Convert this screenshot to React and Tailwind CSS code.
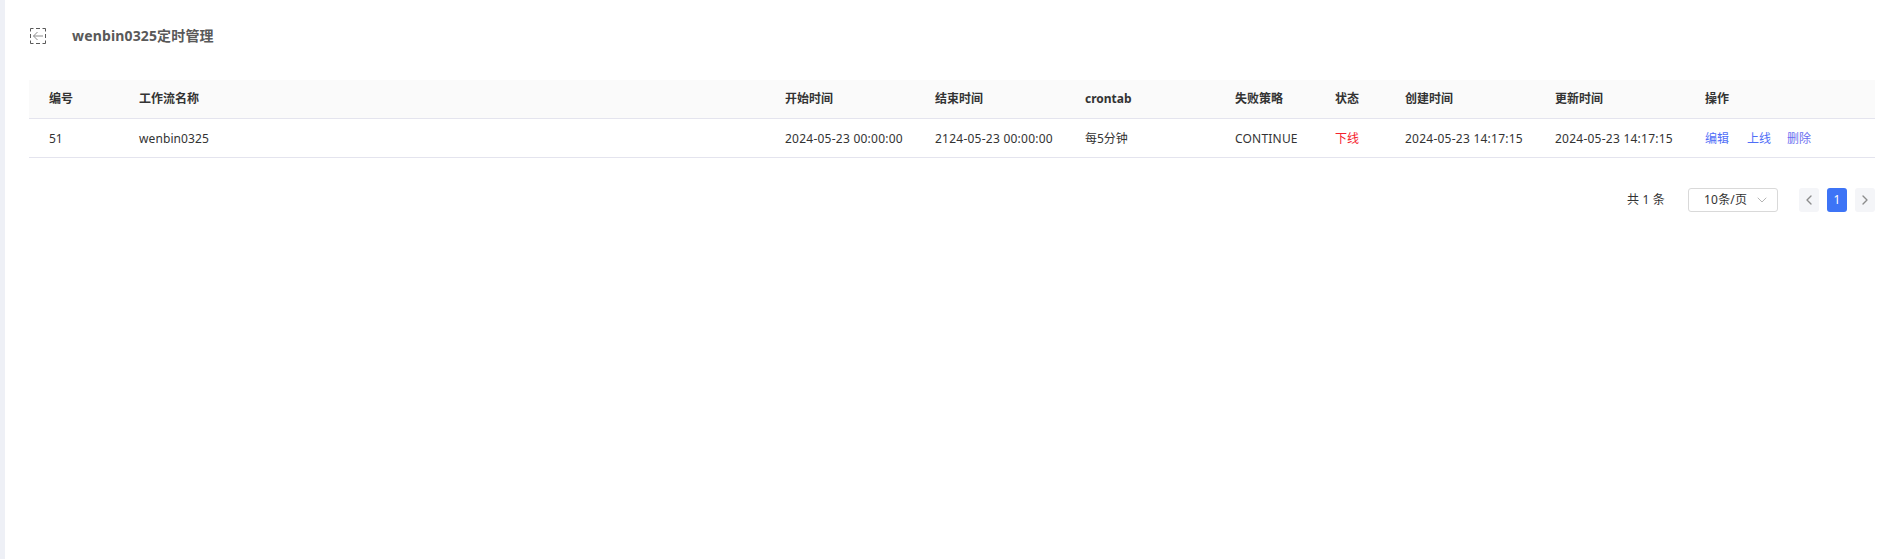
import { ChevronDown, ChevronLeft, ChevronRight } from "lucide-react";

const columns = [
  { key: "id", title: "编号", width: "w-[90px]" },
  { key: "name", title: "工作流名称", width: "w-[646px]" },
  { key: "start", title: "开始时间", width: "w-[150px]" },
  { key: "end", title: "结束时间", width: "w-[150px]" },
  { key: "crontab", title: "crontab", width: "w-[150px]" },
  { key: "strategy", title: "失败策略", width: "w-[100px]" },
  { key: "status", title: "状态", width: "w-[70px]" },
  { key: "created", title: "创建时间", width: "w-[150px]" },
  { key: "updated", title: "更新时间", width: "w-[150px]" },
  { key: "action", title: "操作", width: "w-[190px]" },
];

const row = {
  id: "51",
  name: "wenbin0325",
  start: "2024-05-23 00:00:00",
  end: "2124-05-23 00:00:00",
  crontab: "每5分钟",
  strategy: "CONTINUE",
  created: "2024-05-23 14:17:15",
  updated: "2024-05-23 14:17:15",
};

function BackIcon() {
  return (
    <svg width="16" height="16" viewBox="0 0 16 16" fill="none" className="shrink-0 ml-px">
      <path
        d="M0.5 3.5V0.5H3.5M6 0.5H10M12.5 0.5H15.5V3.5M15.5 6V10M15.5 12.5V15.5H12.5M10 15.5H6M3.5 15.5H0.5V12.5M0.5 10V6"
        stroke="#595959"
      />
      <path d="M13 8H3.5M7.5 4L3.5 8L7.5 12" stroke="#8c8c8c" />
    </svg>
  );
}

export default function App() {
  return (
    <div className="min-h-[559px] bg-white border-l-[5px] border-[#eef0f6] font-['Noto_Sans','Noto_Sans_CJK_SC',sans-serif] text-xs text-[#333]">
      <div className="px-6 pt-[27px]">
        <header className="flex items-center h-[17px] mb-[36px]">
          <BackIcon />
          <h1 className="ml-[26px] text-sm font-bold text-[#595959] tracking-[0.15px]">wenbin0325定时管理</h1>
        </header>

        <table className="w-[1846px] table-fixed border-collapse">
          <thead>
            <tr className="h-[38px] bg-[#fafafa] border-b border-[#e4e4ee]">
              {columns.map((c) => (
                <th key={c.key} className={`${c.width} pl-5 text-left font-bold text-[#333]`}>{c.title}</th>
              ))}
            </tr>
          </thead>
          <tbody>
            <tr className="h-[39px] border-b border-[#e4e4ee]">
              <td className="pl-5 pt-[2px]">{row.id}</td>
              <td className="pl-5 pt-[2px] tracking-[0.1px]">{row.name}</td>
              <td className="pl-5 pt-[2px] tracking-[0.24px]">{row.start}</td>
              <td className="pl-5 pt-[2px] tracking-[0.24px]">{row.end}</td>
              <td className="pl-5 pt-[2px]">{row.crontab}</td>
              <td className="pl-5 pt-[2px] tracking-[0.2px]">{row.strategy}</td>
              <td className="pl-5 pt-[2px] text-[#f5222d]">下线</td>
              <td className="pl-5 pt-[2px] tracking-[0.24px]">{row.created}</td>
              <td className="pl-5 pt-[2px] tracking-[0.24px]">{row.updated}</td>
              <td className="pl-5 pt-[2px] text-[#4f6ef7]">
                <span className="flex">
                  <a>编辑</a>
                  <a className="ml-[18px]">上线</a>
                  <a className="ml-4 text-[#6a6ef0]">删除</a>
                </span>
              </td>
            </tr>
          </tbody>
        </table>

        <div className="flex items-center justify-end mt-[30px] w-[1846px]">
          <span className="mr-[23px] tracking-[0.2px]">共 1 条</span>
          <div className="flex items-center justify-between w-[90px] h-6 pl-[15px] pr-[7px] border border-[#d9d9d9] rounded-[3px]">
            <span className="tracking-[0.2px]">10条/页</span>
            <ChevronDown size={16} strokeWidth={1.25} className="text-[#a6a6a6]" />
          </div>
          <button className="flex items-center justify-center w-5 h-6 ml-[21px] rounded-[3px] bg-[#f4f5f8] text-[#8c8c8c]">
            <ChevronLeft size={16} strokeWidth={2} />
          </button>
          <button className="w-5 h-6 ml-2 rounded-[3px] bg-[#3d74f6] text-white">1</button>
          <button className="flex items-center justify-center w-5 h-6 ml-2 rounded-[3px] bg-[#f4f5f8] text-[#8c8c8c]">
            <ChevronRight size={16} strokeWidth={2} />
          </button>
        </div>
      </div>
    </div>
  );
}
